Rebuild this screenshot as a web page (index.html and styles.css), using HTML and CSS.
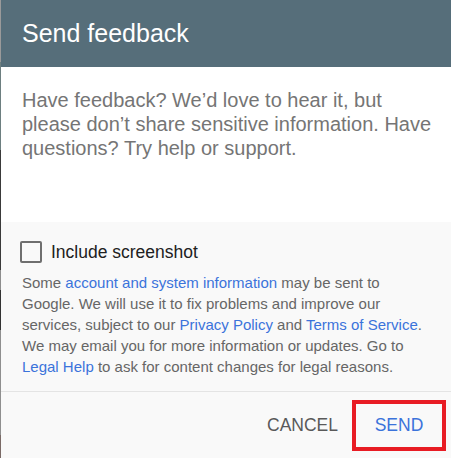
FILE: index.html
```html
<!DOCTYPE html>
<html lang="en">
<head>
    <meta charset="UTF-8">
    <meta name="viewport" content="width=device-width, initial-scale=1.0">
    <title>Send feedback</title>
    <link rel="stylesheet" href="styles.css">
</head>
<body>
    <div class="dialog">
        <div class="header">Send feedback</div>
        <div class="prompt">
            Have feedback? We’d love to hear it, but please don’t share sensitive information. Have questions? Try help or support.
        </div>
        <div class="extras">
            <label class="check-row">
                <span class="checkbox"></span>
                <span>Include screenshot</span>
            </label>
            <p class="legal">
                Some <a href="#">account and system information</a> may be sent to Google. We will use it to fix problems and improve our services, subject to our <a href="#">Privacy Policy</a> and <a href="#">Terms of Service</a>. We may email you for more information or updates. Go to <a href="#">Legal Help</a> to ask for content changes for legal reasons.
            </p>
        </div>
        <div class="actions">
            <button class="btn cancel">Cancel</button>
            <button class="btn send">Send</button>
        </div>
    </div>
</body>
</html>
```

FILE: styles.css
```css
:root {
    --header-color: #566e7a;
    --muted-text: #757575;
    --legal-text: #666666;
    --link-color: #3b73db;
    --panel-color: #f9f9f9;
    --highlight: #e81c24;
}
html, body {
    margin: 0;
    height: 100%;
}
body {
    font-family: "Liberation Sans", Arial, sans-serif;
    background: linear-gradient(to bottom, #9a9a9a 0 62px, #6d7f80 62px 150px, #3a3a3a 150px 270px, #8d8d8d 270px 290px, #333333 290px 330px, #8f8f8f 330px 435px, #7a6a66 435px);
    padding-left: 1px;
    box-sizing: border-box;
}
.dialog {
    background-color: white;
    height: 100%;
    display: flex;
    flex-direction: column;
}
.header {
    flex-shrink: 0;
    background-color: var(--header-color);
    color: white;
    font-size: 25px;
    height: 67px;
    padding: 0 21px;
    display: flex;
    align-items: center;
}
.prompt {
    flex-shrink: 0;
    color: var(--muted-text);
    font-size: 20px;
    line-height: 24px;
    padding: 21px 12px 0 21px;
    height: 155px;
    box-sizing: border-box;
}
.extras {
    flex-shrink: 0;
    background-color: var(--panel-color);
    padding: 19px 20px 0 21px;
    border-bottom: 1px solid #e4e4e4;
}
.check-row {
    display: flex;
    align-items: center;
    gap: 9px;
    margin-left: -2px;
    font-size: 17.5px;
    color: #212121;
}
.checkbox {
    width: 18px;
    height: 18px;
    border: 2px solid #6f6f6f;
    border-radius: 2px;
}
.legal {
    margin: 9px 0 0;
    padding-bottom: 14px;
    font-size: 15px;
    line-height: 21px;
    color: var(--legal-text);
}
.legal a {
    color: var(--link-color);
    text-decoration: none;
}
.actions {
    flex: 1;
    background-color: var(--panel-color);
    display: flex;
    justify-content: flex-end;
    align-items: center;
    gap: 14px;
    padding-right: 5px;
}
.btn {
    font-family: inherit;
    font-size: 17.5px;
    text-transform: uppercase;
    background: none;
    border: none;
    padding: 0;
    cursor: pointer;
}
.cancel {
    color: #595959;
}
.send {
    color: var(--link-color);
    width: 94px;
    height: 51px;
    border: 4px solid var(--highlight);
    box-sizing: border-box;
}
```
